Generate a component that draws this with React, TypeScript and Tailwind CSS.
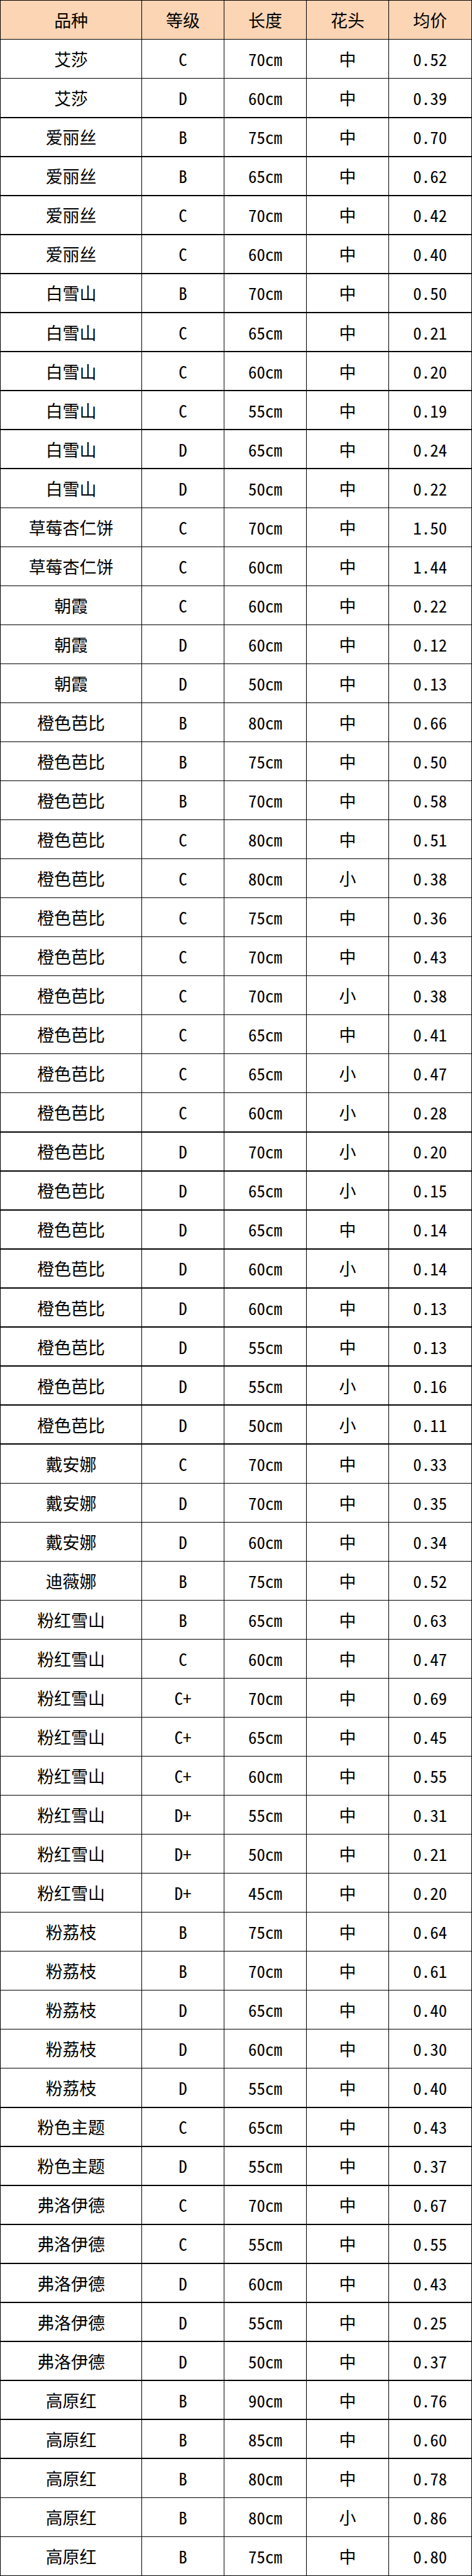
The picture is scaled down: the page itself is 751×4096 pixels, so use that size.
const rows: [string, string, string, string, string][] = [
  ["艾莎", "C", "70cm", "中", "0.52"],
  ["艾莎", "D", "60cm", "中", "0.39"],
  ["爱丽丝", "B", "75cm", "中", "0.70"],
  ["爱丽丝", "B", "65cm", "中", "0.62"],
  ["爱丽丝", "C", "70cm", "中", "0.42"],
  ["爱丽丝", "C", "60cm", "中", "0.40"],
  ["白雪山", "B", "70cm", "中", "0.50"],
  ["白雪山", "C", "65cm", "中", "0.21"],
  ["白雪山", "C", "60cm", "中", "0.20"],
  ["白雪山", "C", "55cm", "中", "0.19"],
  ["白雪山", "D", "65cm", "中", "0.24"],
  ["白雪山", "D", "50cm", "中", "0.22"],
  ["草莓杏仁饼", "C", "70cm", "中", "1.50"],
  ["草莓杏仁饼", "C", "60cm", "中", "1.44"],
  ["朝霞", "C", "60cm", "中", "0.22"],
  ["朝霞", "D", "60cm", "中", "0.12"],
  ["朝霞", "D", "50cm", "中", "0.13"],
  ["橙色芭比", "B", "80cm", "中", "0.66"],
  ["橙色芭比", "B", "75cm", "中", "0.50"],
  ["橙色芭比", "B", "70cm", "中", "0.58"],
  ["橙色芭比", "C", "80cm", "中", "0.51"],
  ["橙色芭比", "C", "80cm", "小", "0.38"],
  ["橙色芭比", "C", "75cm", "中", "0.36"],
  ["橙色芭比", "C", "70cm", "中", "0.43"],
  ["橙色芭比", "C", "70cm", "小", "0.38"],
  ["橙色芭比", "C", "65cm", "中", "0.41"],
  ["橙色芭比", "C", "65cm", "小", "0.47"],
  ["橙色芭比", "C", "60cm", "小", "0.28"],
  ["橙色芭比", "D", "70cm", "小", "0.20"],
  ["橙色芭比", "D", "65cm", "小", "0.15"],
  ["橙色芭比", "D", "65cm", "中", "0.14"],
  ["橙色芭比", "D", "60cm", "小", "0.14"],
  ["橙色芭比", "D", "60cm", "中", "0.13"],
  ["橙色芭比", "D", "55cm", "中", "0.13"],
  ["橙色芭比", "D", "55cm", "小", "0.16"],
  ["橙色芭比", "D", "50cm", "小", "0.11"],
  ["戴安娜", "C", "70cm", "中", "0.33"],
  ["戴安娜", "D", "70cm", "中", "0.35"],
  ["戴安娜", "D", "60cm", "中", "0.34"],
  ["迪薇娜", "B", "75cm", "中", "0.52"],
  ["粉红雪山", "B", "65cm", "中", "0.63"],
  ["粉红雪山", "C", "60cm", "中", "0.47"],
  ["粉红雪山", "C+", "70cm", "中", "0.69"],
  ["粉红雪山", "C+", "65cm", "中", "0.45"],
  ["粉红雪山", "C+", "60cm", "中", "0.55"],
  ["粉红雪山", "D+", "55cm", "中", "0.31"],
  ["粉红雪山", "D+", "50cm", "中", "0.21"],
  ["粉红雪山", "D+", "45cm", "中", "0.20"],
  ["粉荔枝", "B", "75cm", "中", "0.64"],
  ["粉荔枝", "B", "70cm", "中", "0.61"],
  ["粉荔枝", "D", "65cm", "中", "0.40"],
  ["粉荔枝", "D", "60cm", "中", "0.30"],
  ["粉荔枝", "D", "55cm", "中", "0.40"],
  ["粉色主题", "C", "65cm", "中", "0.43"],
  ["粉色主题", "D", "55cm", "中", "0.37"],
  ["弗洛伊德", "C", "70cm", "中", "0.67"],
  ["弗洛伊德", "C", "55cm", "中", "0.55"],
  ["弗洛伊德", "D", "60cm", "中", "0.43"],
  ["弗洛伊德", "D", "55cm", "中", "0.25"],
  ["弗洛伊德", "D", "50cm", "中", "0.37"],
  ["高原红", "B", "90cm", "中", "0.76"],
  ["高原红", "B", "85cm", "中", "0.60"],
  ["高原红", "B", "80cm", "中", "0.78"],
  ["高原红", "B", "80cm", "小", "0.86"],
  ["高原红", "B", "75cm", "中", "0.80"],
]

const headers = ["品种", "等级", "长度", "花头", "均价"]

const cjk = "font-['Noto_Sans_CJK_SC',sans-serif]"
const mono = "font-['Noto_Sans_Mono_CJK_SC','DejaVu_Sans_Mono',monospace]"
const narrow = "font-['Liberation_Sans_Narrow','Noto_Sans_Mono_CJK_SC',sans-serif]"

export default function App() {
  return (
    <div className="w-[751px] h-[4096px] bg-black p-[1.4px] grid grid-cols-[226fr_131fr_131fr_131fr_132fr] grid-rows-[repeat(66,minmax(0,1fr))] gap-[1.4px] text-black text-[27px] leading-none">
      {headers.map((h) => (
        <div key={h} className={`bg-[#fcd5b4] flex items-center justify-center ${cjk}`}>
          {h}
        </div>
      ))}
      {rows.map((r, i) => (
        <Row key={i} r={r} />
      ))}
    </div>
  )
}

function Row({ r }: { r: [string, string, string, string, string] }) {
  return (
    <>
      <div className={`bg-white flex items-center justify-center ${cjk}`}>{r[0]}</div>
      <div className={`bg-white flex items-center justify-center ${mono}`}>{r[1]}</div>
      <div className={`bg-white flex items-center justify-center ${narrow}`}>{r[2]}</div>
      <div className={`bg-white flex items-center justify-center ${cjk}`}>{r[3]}</div>
      <div className={`bg-white flex items-center justify-center ${mono}`}>{r[4]}</div>
    </>
  )
}
